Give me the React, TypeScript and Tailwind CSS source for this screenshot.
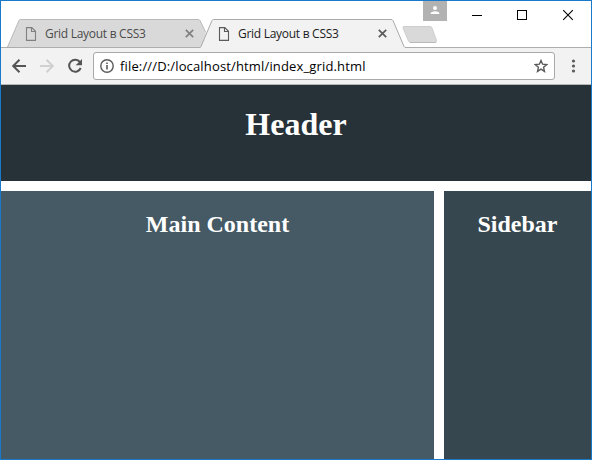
import React from "react";

const uiFont = "font-['Open_Sans','Noto_Sans',sans-serif]";

function PageIcon({ color }: { color: string }) {
  return (
    <svg className="block shrink-0" width="12" height="14" viewBox="0 0 12 14" fill="none" stroke={color} strokeWidth="1.1">
      <path d="M1.5 .6H6.8L10.5 4.3V13.4H1.5Z" />
      <path d="M6.5 .6V4.5H10.5" />
    </svg>
  );
}

function CloseIcon({ color }: { color: string }) {
  return (
    <svg className="block shrink-0" width="9" height="9" viewBox="0 0 9 9" stroke={color} strokeWidth="1.7">
      <path d="M.8 .8L8.2 8.2M8.2 .8L.8 8.2" />
    </svg>
  );
}

function Tab({ title, active }: { title: string; active?: boolean }) {
  return (
    <div className={`relative -mb-px h-[29px] w-[206px] shrink-0 ${active ? "z-10 -ml-[13px]" : ""}`}>
      <svg className="absolute inset-0" width="206" height="29" viewBox="0 0 206 29">
        {active ? (
          <>
            <path d="M0 29L1 28L12 1.5Q12.5 .5 13.5 .5H191Q192.5 .5 193 1.5L204 27L206 29Z" fill="#f2f2f2" />
            <path d="M0 28.5L1 27.5L12 1.5Q12.5 .5 13.5 .5H191Q192.5 .5 193 1.5L204 27.5Q204.5 28.5 206 28.5" fill="none" stroke="#a9a9a9" />
          </>
        ) : (
          <>
            <path d="M.5 28L12 1.5Q12.5 .5 13.5 .5H191Q192.5 .5 193 1.5L199 14L194 28Z" fill="#d9d9d9" />
            <path d="M.5 28L12 1.5Q12.5 .5 13.5 .5H191Q192.5 .5 193 1.5L198.5 13" fill="none" stroke="#b9b9b9" />
          </>
        )}
      </svg>
      <div className="relative flex h-full items-center pl-[18px]">
        <PageIcon color={active ? "#5a5a5a" : "#808080"} />
        <span className={`ml-[8px] w-[140px] whitespace-nowrap text-[12px] leading-[16px] tracking-[-0.28px] ${active ? "text-[#1c1c1c]" : "text-[#4b4b4b]"}`}>
          {title}
        </span>
        <CloseIcon color={active ? "#5a5a5a" : "#808080"} />
      </div>
    </div>
  );
}

function TabStrip() {
  return (
    <div className="flex h-[47px] items-end border-b border-[#adadad] bg-white">
      <div className="flex pl-[6px]">
        <Tab title="Grid Layout в CSS3" />
        <Tab title="Grid Layout в CSS3" active />
      </div>
      <svg className="-mr-[32px] mb-[3px] -ml-[5px] block shrink-0" width="37" height="19" viewBox="0 0 37 19">
        <path d="M3 1.5H29Q30.5 1.5 31 3L35.5 15.5Q36 17.5 34 17.5H10Q8 17.5 7.5 16L2 3Q1.5 1.5 3 1.5Z" fill="#d9d9d9" stroke="#cecece" />
        <path d="M9 17.5H34.5" stroke="#b9b9b9" />
      </svg>
      <div className="ml-auto flex h-full shrink-0 items-start">
        <div className="flex h-5 w-6 items-start justify-center bg-[#b2b2b2] pt-[5px]">
          <svg width="10" height="9" viewBox="0 0 10 9" fill="#fff">
            <circle cx="5" cy="2.1" r="2" />
            <path d="M.7 8V6.7Q1.7 5.2 5 5.2T9.3 6.7V8Z" />
          </svg>
        </div>
        <svg className="block" width="144" height="28" viewBox="447 1 144 28" fill="none" stroke="#000">
          <path d="M472 15.5H482M517.5 10.5H526.5V19.5H517.5Z" shapeRendering="crispEdges" />
          <path d="M563.2 10.2L572.8 19.8M572.8 10.2L563.2 19.8" strokeWidth="1.1" />
        </svg>
      </div>
    </div>
  );
}

function Toolbar() {
  return (
    <div className="flex h-[37px] items-center border-b border-[#b6b6b6] bg-[#f2f2f2]">
      <svg className="block shrink-0" width="92" height="36" viewBox="1 48 92 36" fill="none" strokeWidth="2">
        <path d="M26 66H13.5M19.5 59.7L13.2 66L19.5 72.3" stroke="#555" />
        <path d="M40 66H52.5M46.5 59.7L52.8 66L46.5 72.3" stroke="#d0d0d0" />
        <path d="M80 62.2A6 6 0 1 0 80.7 68" stroke="#555" />
        <path d="M82 59V65.3H75.7Z" fill="#555" />
      </svg>
      <div className="flex h-7 w-[462px] items-center rounded-[3px] border border-[#a8a8a8] bg-white">
        <svg className="ml-[6px] block shrink-0" width="14" height="14" viewBox="0 0 14 14" fill="none" stroke="#5a5a5a">
          <circle cx="7" cy="7" r="6.2" strokeWidth="1.4" />
          <path d="M7 6V10.5M7 3.4V5" strokeWidth="1.6" />
        </svg>
        <span className="ml-[6px] whitespace-nowrap text-[13px] leading-5 tracking-[0.15px] text-black">file:///D:/localhost/html/index_grid.html</span>
        <svg className="ml-auto mr-[6px] block shrink-0" width="14" height="14" viewBox="0 0 14 14" fill="none" stroke="#5a5a5a" strokeWidth="1.4">
          <path d="M7 1.5L8.6 5.2L12.7 5.6L9.6 8.3L10.5 12.4L7 10.2L3.5 12.4L4.4 8.3L1.3 5.6L5.4 5.2Z" />
        </svg>
      </div>
      <svg className="ml-[16px] block shrink-0" width="5" height="14" viewBox="0 0 5 14" fill="#5a5a5a">
        <circle cx="2.5" cy="2" r="1.6" />
        <circle cx="2.5" cy="7" r="1.6" />
        <circle cx="2.5" cy="12" r="1.6" />
      </svg>
    </div>
  );
}

export default function App() {
  return (
    <div className="flex h-[460px] w-[592px] flex-col overflow-hidden border border-[#1979ca] bg-white">
      <div className={uiFont}>
        <TabStrip />
        <Toolbar />
      </div>
      <div className="grid flex-1 grid-cols-[433px_147px] grid-rows-[96px_1fr] gap-[10px] text-center font-['Liberation_Serif',serif] font-bold text-white">
        <header className="col-span-2 bg-[#263238] pt-[21px]">
          <h1 className="text-[32px] leading-[37px]">Header</h1>
        </header>
        <main className="bg-[#455a64] pt-5">
          <h2 className="text-[24px] leading-[27px]">Main Content</h2>
        </main>
        <aside className="bg-[#37474f] pt-5">
          <h2 className="text-[24px] leading-[27px]">Sidebar</h2>
        </aside>
      </div>
    </div>
  );
}
